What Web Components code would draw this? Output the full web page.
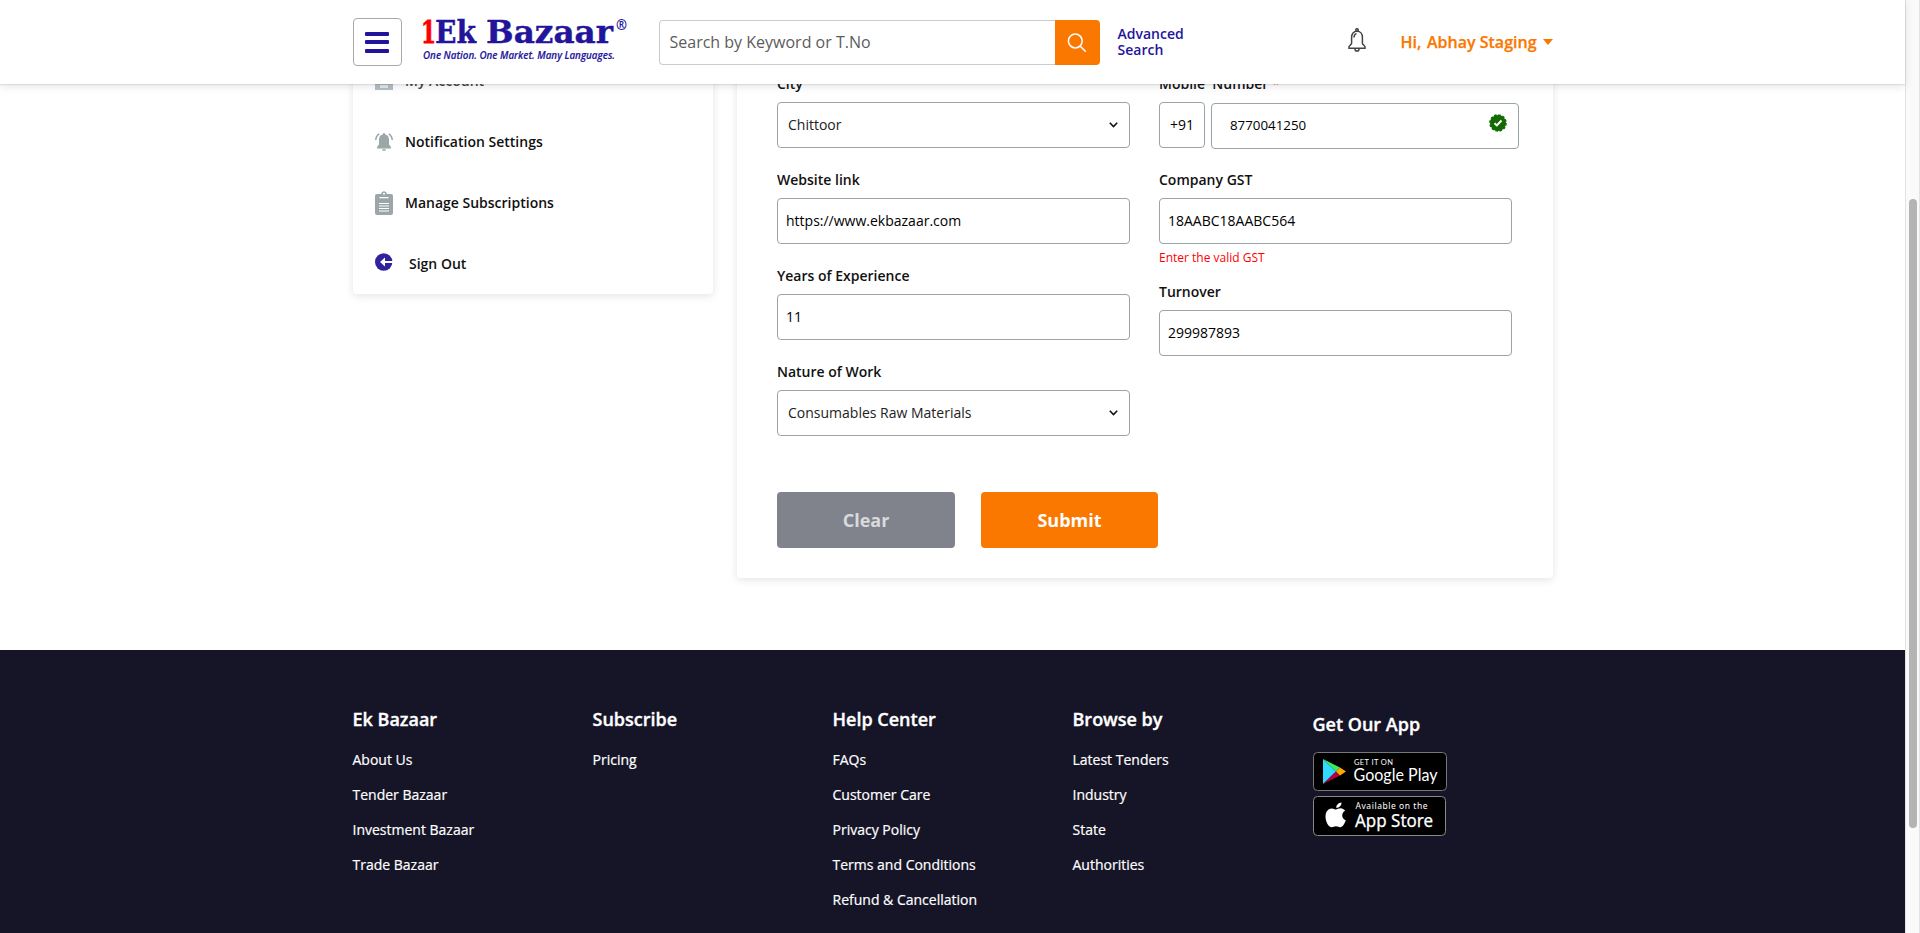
<!DOCTYPE html>
<html lang="en">
<head>
<meta charset="utf-8">
<title>Ek Bazaar</title>
<style>
html,body{margin:0;height:100%;overflow:hidden;background:#fff}
body{font-family:"Open Sans",sans-serif;font-size:14px;color:#111;-webkit-font-smoothing:antialiased}
</style>
</head>
<body>
<eb-app></eb-app>
<script>
const define=(name,css,html)=>customElements.define(name,class extends HTMLElement{
  constructor(){
    super();
    const t=document.createElement('template');
    t.innerHTML=`<style>*{box-sizing:border-box}${css}</style>${typeof html==='function'?html(this):html}`;
    this.attachShadow({mode:'open'}).append(t.content.cloneNode(true));
  }
});

define('eb-logo',`:host{display:block;width:212px;height:54px}svg{display:block;overflow:visible}`,
`<svg width="212" height="54" viewBox="0 0 212 54">
<g font-family="'DejaVu Serif'" font-weight="700" font-size="31" fill="#23159b" stroke="#23159b" stroke-width=".4">
<text x="12" y="33.3" textLength="41" lengthAdjust="spacingAndGlyphs">Ek</text>
<text x="63" y="33.3" textLength="127" lengthAdjust="spacingAndGlyphs">Bazaar</text>
<text x="-2" y="33.3" fill="#f00" stroke="#f00" stroke-width=".8" textLength="15" lengthAdjust="spacingAndGlyphs">1</text></g>
<text x="193" y="20" font-family="Open Sans" font-weight="700" font-size="14" fill="#23159b" textLength="11" lengthAdjust="spacingAndGlyphs">®</text>
<text x="0" y="49" font-family="Open Sans" font-style="italic" font-weight="600" font-size="10" fill="#23159b" stroke="#23159b" stroke-width=".15" textLength="192" lengthAdjust="spacingAndGlyphs">One Nation. One Market. Many Languages.</text>
</svg>`);

define('eb-search',`:host{display:flex;width:441px;height:45px}
.q{flex:1;border:1px solid #c9cbce;border-right:0;border-radius:4px 0 0 4px;padding-left:10px;font-size:16px;line-height:43px;color:#5c5c5c}
.b{width:45px;background:#fa7800;border-radius:0 4px 4px 0;display:grid;place-items:center}`,
`<div class="q">Search by Keyword or T.No</div><div class="b"><svg width="20" height="20" viewBox="0 0 20 20" fill="none" stroke="#fff" stroke-width="1.5"><circle cx="8.3" cy="8" r="6.9"/><path d="M13 13l5.8 5.6"/></svg></div>`);

define('eb-header',`:host{display:block;position:relative;z-index:2;height:84px;background:#fff;box-shadow:0 1px 1px rgba(0,0,0,.07),0 2px 8px rgba(60,64,90,.15)}
.in{width:1200px;height:84px;margin:0 auto;display:flex;align-items:flex-start}
.menu{width:49px;height:48px;margin-top:18px;border:1px solid #a9a9a9;border-radius:4px;display:flex;flex-direction:column;align-items:center;gap:4.4px;padding-top:13px}
.menu i{width:24px;height:4px;border-radius:1px;background:#23159b}
eb-logo{margin:10px 24px 0 21px}
eb-search{margin:20px 0 0}
.adv{margin:26px 0 0 18px;width:80px;font-size:14px;font-weight:600;line-height:16px;color:#23159b}
.bell{margin:28px 0 0 150px;width:18px;height:24px}
.user{margin:30px 0 0 auto;font-size:16px;font-weight:600;line-height:24px;color:#fa7800;display:flex;align-items:center;-webkit-text-stroke:.25px #fa7800}
.user b{font-weight:600;margin-right:1.5px}
.user i{border:5px solid transparent;border-top:6px solid #fa7800;border-bottom:0;margin-left:6px}`,
`<div class="in"><div class="menu"><i></i><i></i><i></i></div><eb-logo></eb-logo><eb-search></eb-search>
<div class="adv">Advanced Search</div>
<svg class="bell" viewBox="0 0 18 24" fill="none" stroke="#444" stroke-width="1.5"><path d="M9 3.2c-3.4 0-5.4 2.7-5.4 6v6c0 1.4-2.6 2.600-2.6 3.600v1.400h16v-1.400c0-1-2.600-2.200-2.600-3.600v-6c0-3.300-2-6-5.400-6z"/><circle cx="9" cy="2" r="1.300"/><path d="M7 20.500v.8c0 2.400 4 2.400 4 0v-.8M6 9.500c0-2 1-3.500 2.500-3.900"/></svg>
<div class="user"><span><b>Hi,</b> Abhay Staging</span><i></i></div></div>`);

const icons={
building:`<svg width="18" height="22" viewBox="0 0 18 22"><path fill="#b4bdbf" d="M0 0h18v20h-18z"/><path fill="#e4e7e8" d="M5 15h8v3H5z"/></svg>`,
bell:`<svg width="18" height="18" viewBox="0 0 18 18" fill="#9aa6a8"><path d="M9 0c.7 0 1 .5 1 1.200 2.600.5 4 2.600 4 5.300v4.500c0 1.500 2 2.300 2 3.600v.9H2v-.9c0-1.300 2-2.100 2-3.600V6.500c0-2.700 1.400-4.800 4-5.300C8 .5 8.300 0 9 0zM7 16.300h4c0 2-4 2-4 0z"/><path fill="none" stroke="#9aa6a8" stroke-width="1.500" d="M4.300.8C2 2.300.8 4 .8 7M13.700.8c2.300 1.500 3.500 3.200 3.500 6.200"/></svg>`,
clip:`<svg width="18" height="24" viewBox="0 0 18 24"><path fill="#9aa6a8" d="M2 3h4.200C6.500-.8 11.500-.8 11.800 3H16a2 2 0 012 2v17a2 2 0 01-2 2H2a2 2 0 01-2-2V5a2 2 0 012-2z"/><path fill="none" stroke="#fff" stroke-width="1.200" d="M4.500 6.700h9M4 12.500h10M4 15h10M4 17.500h10M4 20h10"/><circle cx="9" cy="2.800" r="1" fill="#fff"/></svg>`,
out:`<svg width="18" height="18" viewBox="0 0 18 18" style="margin-top:-3px"><circle cx="8.700" cy="9" r="8.700" fill="#30239d"/><path fill="#fff" d="M5 9l5-4.500V8h8v2h-8v3.500z"/></svg>`};

define('eb-nav-item',`:host{display:flex;align-items:center;height:61px;padding-left:22px;font-weight:600;color:#111}
:host([icon="building"]){color:#444}
.i{width:30px;height:24px;display:flex;align-items:center;flex:none}`,
el=>`<div class="i">${icons[el.getAttribute('icon')]}</div><slot></slot>`);

define('eb-sidebar',`:host{display:block;width:360px;height:244px;border-radius:4px;background:#fff;box-shadow:0 2px 8px rgba(0,0,0,.11)}
.o{padding-left:4px}`,
`<eb-nav-item icon="building">My Account</eb-nav-item><eb-nav-item icon="bell">Notification Settings</eb-nav-item><eb-nav-item icon="clip">Manage Subscriptions</eb-nav-item><eb-nav-item icon="out"><span class="o">Sign Out</span></eb-nav-item>`);

define('eb-box',`:host{display:flex;align-items:center;justify-content:space-between;box-sizing:border-box;height:46px;border:1px solid #98a4a7;border-radius:4px;padding:0 11px 0 8px;color:#000}
.t{padding-bottom:2px;flex:1}
:host([select]){padding-left:10px;color:#222}`,
el=>`<span class="t"><slot></slot></span>${el.hasAttribute('select')?'<svg width="9" height="6" viewBox="0 0 9 6" fill="none" stroke="#111" stroke-width="1.600"><path d="M.8.8l3.700 3.700L8.200.8"/></svg>':''}`);

define('eb-field',`:host{display:block;margin-bottom:22px}
.l{height:20px;line-height:20px;margin-bottom:8px;font-weight:600;color:#111;white-space:pre}
.s{color:#f00}
.e{height:16px;line-height:27px;font-size:12px;color:#f00}`,
el=>`<div class="l">${el.getAttribute('label')}${el.hasAttribute('required')?' <span class="s">*</span>':''}</div><slot></slot>${el.hasAttribute('error')?`<div class="e">${el.getAttribute('error')}</div>`:''}`);

define('eb-phone',`:host{display:flex;gap:6px;height:46px}
.c{width:46px;flex:none;padding:0 0 0 10px}
.n{width:308px;flex:none;margin-top:1px;padding:0 12px 0 18px;font-size:13.33px}
svg{margin-top:-4px}
.row{display:flex;align-items:center;justify-content:space-between;width:277px}`,
`<eb-box class="c">+91</eb-box><eb-box class="n"><div class="row"><span>8770041250</span><svg width="18" height="18" viewBox="-9 -9 18 18"><circle r="8" fill="#146b04"/><circle r="8" fill="none" stroke="#146b04" stroke-width="1.600" stroke-dasharray="2.500 1.690"/><path d="M-3.500.2l2.300 2.200L3.500-2.500" fill="none" stroke="#fff" stroke-width="2"/></svg></div></eb-box>`);

define('eb-button',`:host{display:grid;place-items:center;width:178px;height:56px;box-sizing:border-box;border-radius:4px;background:#fa7800;color:#fff;font-size:18px;font-weight:700}
:host([muted]){background:#80838c;color:#d9dadc}`,`<slot></slot>`);

define('eb-form',`:host{display:block;width:816px;height:528px;box-sizing:border-box;padding:24px 0 0 40px;border-radius:4px;background:#fff;box-shadow:0 2px 8px rgba(0,0,0,.11)}
.g{display:grid;grid-template-columns:353px 353px;gap:29px}
.b{display:flex;gap:26px;margin-top:34px}`,
`<div class="g"><div>
<eb-field label="City"><eb-box select>Chittoor</eb-box></eb-field>
<eb-field label="Website link"><eb-box>https://www.ekbazaar.com</eb-box></eb-field>
<eb-field label="Years of Experience"><eb-box>11</eb-box></eb-field>
<eb-field label="Nature of Work"><eb-box select>Consumables Raw Materials</eb-box></eb-field>
</div><div>
<eb-field label="Mobile  Number" required><eb-phone></eb-phone></eb-field>
<eb-field label="Company GST" error="Enter the valid GST"><eb-box>18AABC18AABC564</eb-box></eb-field>
<eb-field label="Turnover"><eb-box>299987893</eb-box></eb-field>
</div></div><div class="b"><eb-button muted>Clear</eb-button><eb-button style="width:177px">Submit</eb-button></div>`);

define('eb-links',`:host{display:block;width:240px;color:#fff;-webkit-text-stroke:.2px #fff}
h4{margin:0 0 11px;font-size:18px;line-height:24px;font-weight:600;-webkit-text-stroke:.35px #fff}
a{display:block;height:35px;line-height:35px}`,
el=>`<h4>${el.getAttribute('heading')}</h4>${el.getAttribute('items').split('|').map(t=>`<a>${t}</a>`).join('')}`);

define('eb-apps',`:host{display:block;padding-top:5px;color:#fff}
h4{margin:0 0 16px;font-size:18px;line-height:24px;font-weight:600;-webkit-text-stroke:.35px #fff}
svg{display:block;margin-bottom:5px}`,
`<h4>Get Our App</h4>
<svg width="134" height="39" viewBox="0 0 134 39"><rect x=".5" y=".5" width="133" height="38" rx="4" fill="#000" stroke="#777"/>
<path fill="#32d9ff" d="M10 7v25l13-12.500z"/><path fill="#3bea62" d="M10 7l17 8.500-4 4z"/><path fill="#b3003f" d="M10 32l17-8.500-4-4z"/><path fill="#ffa800" d="M27 15.500l6 4-6 4-4-4z"/>
<g fill="#fff"><text x="41" y="12.500" font-family="Lato" font-size="7.500" textLength="39">GET IT ON</text><text x="40.500" y="29" font-family="Lato" font-size="17" textLength="84" lengthAdjust="spacingAndGlyphs">Google Play</text></g></svg>
<svg width="133" height="40" viewBox="0 0 133 40"><rect x=".5" y=".5" width="132" height="39" rx="4" fill="#000" stroke="#888"/>
<path fill="#fff" d="M28.500 6.500c.2 3-2.200 5.300-5.300 5.300 0-2.800 2.300-5 5.300-5.300zM22.800 13.500c1.600 0 2.600-1.200 4.700-1.200 1.900 0 3.600 1 4.600 2.400-4.300 2.500-3.500 8 .7 9.600-1.200 3.300-3.200 7-5.500 7-1.700 0-2.200-1-4.300-1s-2.600 1-4.200 1c-3.400 0-6.300-6-6.300-10.600 0-5.300 3-8.300 6.200-8.300 1.900 0 3 1.100 4.100 1.100z"/>
<g fill="#fff" font-family="Noto Sans"><text x="42.500" y="13" font-size="8.500" textLength="72">Available on the</text><text x="42" y="31" font-size="18" stroke="#fff" stroke-width=".25" textLength="78" lengthAdjust="spacingAndGlyphs">App Store</text></g></svg>`);

define('eb-footer',`:host{display:block;height:283px;background:#161527}
.in{width:1200px;margin:0 auto;padding-top:57px;display:grid;grid-template-columns:repeat(5,240px)}`,
`<div class="in"><eb-links heading="Ek Bazaar" items="About Us|Tender Bazaar|Investment Bazaar|Trade Bazaar"></eb-links>
<eb-links heading="Subscribe" items="Pricing"></eb-links>
<eb-links heading="Help Center" items="FAQs|Customer Care|Privacy Policy|Terms and Conditions|Refund &amp;amp; Cancellation"></eb-links>
<eb-links heading="Browse by" items="Latest Tenders|Industry|State|Authorities"></eb-links><eb-apps></eb-apps></div>`);

define('eb-scrollbar',`:host{display:block;width:15px;box-sizing:border-box;height:933px;background:#fafafa;border:solid #e3e3e3;border-width:0 1px;padding:199px 0 0 3px}
i{display:block;width:8px;height:629px;border-radius:4px;background:#b4b4b4}`,`<i></i>`);

define('eb-app',`:host{display:flex;height:933px;width:1920px}
.page{width:1905px}
main{height:566px;overflow:hidden}
.c{width:1200px;margin:-34px 0 0 353px;display:flex;gap:24px;align-items:flex-start}`,
`<div class="page"><eb-header></eb-header><main><div class="c"><eb-sidebar></eb-sidebar><eb-form></eb-form></div></main><eb-footer></eb-footer></div><eb-scrollbar></eb-scrollbar>`);
</script>
</body>
</html>
